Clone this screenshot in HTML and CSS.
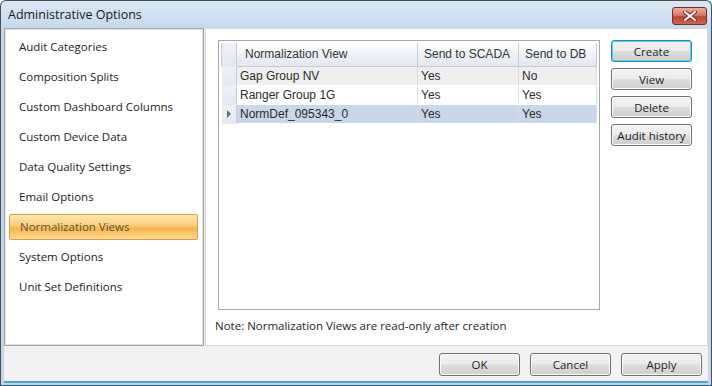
FILE: index.html
```html
<!DOCTYPE html>
<html lang="en">
<head>
    <meta charset="UTF-8">
    <title>Administrative Options</title>
    <link rel="stylesheet" href="styles.css">
</head>
<body>
    <div class="window">
        <div class="titlebar">
            <span class="title">Administrative Options</span>
            <button class="close" title="Close">
                <svg width="14" height="10" viewBox="0 0 14 10">
                    <path d="M2 1 L12 9 M12 1 L2 9" stroke="#6b2a22" stroke-width="4" stroke-linecap="square"/>
                    <path d="M2 1 L12 9 M12 1 L2 9" stroke="#ffffff" stroke-width="2" stroke-linecap="square"/>
                </svg>
            </button>
        </div>

        <div class="client">
            <div class="main">
                <ul class="sidebar">
                    <li>Audit Categories</li>
                    <li>Composition Splits</li>
                    <li>Custom Dashboard Columns</li>
                    <li>Custom Device Data</li>
                    <li>Data Quality Settings</li>
                    <li>Email Options</li>
                    <li class="active">Normalization Views</li>
                    <li>System Options</li>
                    <li>Unit Set Definitions</li>
                </ul>

                <div class="panel">
                    <div class="panel-top">
                        <div class="grid">
                            <table>
                                <tr class="head">
                                    <th class="rowhead"></th>
                                    <th class="c1">Normalization View</th>
                                    <th class="c2">Send to SCADA</th>
                                    <th class="c3">Send to DB</th>
                                </tr>
                                <tr class="alt">
                                    <td class="rowhead"></td>
                                    <td>Gap Group NV</td>
                                    <td>Yes</td>
                                    <td>No</td>
                                </tr>
                                <tr>
                                    <td class="rowhead"></td>
                                    <td>Ranger Group 1G</td>
                                    <td>Yes</td>
                                    <td>Yes</td>
                                </tr>
                                <tr class="selected">
                                    <td class="rowhead"><span class="arrow"></span></td>
                                    <td>NormDef_095343_0</td>
                                    <td>Yes</td>
                                    <td>Yes</td>
                                </tr>
                            </table>
                        </div>
                        <div class="actions">
                            <button class="btn default">Create</button>
                            <button class="btn">View</button>
                            <button class="btn">Delete</button>
                            <button class="btn">Audit history</button>
                        </div>
                    </div>
                    <p class="note">Note: Normalization Views are read-only after creation</p>
                </div>
            </div>

            <div class="footer">
                <button class="btn wide">OK</button>
                <button class="btn wide">Cancel</button>
                <button class="btn wide">Apply</button>
            </div>
        </div>
    </div>
</body>
</html>
```

FILE: styles.css
```css
* {
    box-sizing: border-box;
}

body {
    margin: 0;
    padding: 0;
    font-family: 'Open Sans', 'Noto Sans', sans-serif;
    font-size: 11px;
    color: #1e1e1e;
    background: #ffffff;
}

.window {
    width: 712px;
    height: 386px;
    border: 1px solid #4a4f55;
    border-bottom-color: #1f5e78;
    border-radius: 6px 6px 0 0;
    background: linear-gradient(#dae7f5, #c3d8ee 30px, #c2d7ec);
    display: flex;
    flex-direction: column;
    overflow: hidden;
}

.titlebar {
    height: 27px;
    display: flex;
    align-items: center;
    justify-content: space-between;
    padding: 0 4px 0 7px;
}

.title {
    font-size: 12.5px;
    color: #1a1a1a;
}

.close {
    width: 35px;
    height: 18px;
    margin-top: 3px;
    border: 1px solid #6e3128;
    border-radius: 3px;
    background: linear-gradient(#ecaa9c, #d77a68 45%, #c0432f 55%, #d4654f);
    display: flex;
    align-items: center;
    justify-content: center;
    padding: 0;
}

.client {
    flex: 1;
    margin: 0 3px 2px 3px;
    background: #f3f1f4;
    display: flex;
    flex-direction: column;
    border-bottom: 2px solid #43a9c9;
}

.main {
    height: 318px;
    display: flex;
    gap: 1px;
}

.sidebar {
    width: 200px;
    margin: 0;
    padding: 3px 4px;
    list-style: none;
    background: #fff;
    border: 1px solid #a5a5a5;
    border-right: 2px solid #9d9d9d;
    outline: 1px solid #e3e3e3;
    outline-offset: -2px;
    display: flex;
    flex-direction: column;
}

.sidebar li {
    height: 30px;
    line-height: 29px;
    padding-left: 10px;
    font-size: 11.5px;
    color: #222;
}

.sidebar li.active {
    height: 26px;
    line-height: 24px;
    margin: 2px 0;
    border: 1px solid #dc9c48;
    border-radius: 2px;
    color: #5e5040;
    background: linear-gradient(#fde6b0, #fbcf7a 45%, #f9b347 55%, #fcd992);
}

.panel {
    flex: 1;
    background: #fff;
    border: 1px solid #d8d8d8;
    padding: 11px 12px 0 12px;
    display: flex;
    flex-direction: column;
}

.panel-top {
    display: flex;
    gap: 11px;
}

.grid {
    width: 382px;
    height: 270px;
    border: 1px solid #a8a8a8;
    padding: 2px;
}

.grid table {
    border-collapse: collapse;
    font-family: 'Liberation Sans', Arial, sans-serif;
    font-size: 12px;
}

.grid th {
    height: 23px;
    font-weight: normal;
    text-align: left;
    padding: 0 0 0 6px;
    color: #333;
    background: linear-gradient(#ffffff, #eef1f6 50%, #e2e7f0);
    border: 1px solid #c6ccd6;
    border-top: none;
}

.grid th.c1 {
    width: 181px;
    padding-left: 8px;
}

.grid th.c2 {
    width: 101px;
}

.grid th.c3 {
    width: 78px;
}

.grid td {
    height: 19px;
    padding: 0 0 0 3px;
    color: #2b2b2b;
    border-right: 1px solid #d8dce4;
    border-bottom: 1px solid #ffffff;
}

.grid .rowhead {
    width: 15px;
    padding: 0;
    background: linear-gradient(#eef2f8, #e2e8f1);
    border-right: 1px solid #c6ccd6;
    border-bottom: 1px solid #e4e8ef;
}

.grid tr.alt td {
    background: #efefef;
}

.grid tr.alt td.rowhead {
    background: linear-gradient(#eef2f8, #e2e8f1);
}

.grid tr.selected td {
    background: #c8d7ec;
}

.grid tr.selected td.rowhead {
    background: linear-gradient(#eef2f8, #e2e8f1);
}

.arrow {
    display: block;
    width: 0;
    height: 0;
    margin-left: 5px;
    border-top: 4px solid transparent;
    border-bottom: 4px solid transparent;
    border-left: 4px solid #6a6a6a;
}

.actions {
    display: flex;
    flex-direction: column;
    gap: 6px;
}

.btn {
    width: 81px;
    height: 22px;
    padding: 0;
    font-family: inherit;
    font-size: 11.5px;
    color: #1e1e1e;
    border: 1px solid #707070;
    border-radius: 3px;
    background: linear-gradient(#f3f3f3, #ebebeb 48%, #dddddd 52%, #cfcfcf);
    box-shadow: inset 0 0 0 1px #fcfcfc;
}

.btn.default {
    border-color: #3c7fb1;
    box-shadow: inset 0 0 0 1px #48d8fb;
}

.note {
    margin: 8px 0 0 -3px;
    font-size: 11.5px;
    color: #1e1e1e;
}

.footer {
    flex: 1;
    display: flex;
    justify-content: flex-end;
    align-items: center;
    gap: 10px;
    padding: 2px 6px 0 0;
}

.btn.wide {
    height: 23px;
}
```
